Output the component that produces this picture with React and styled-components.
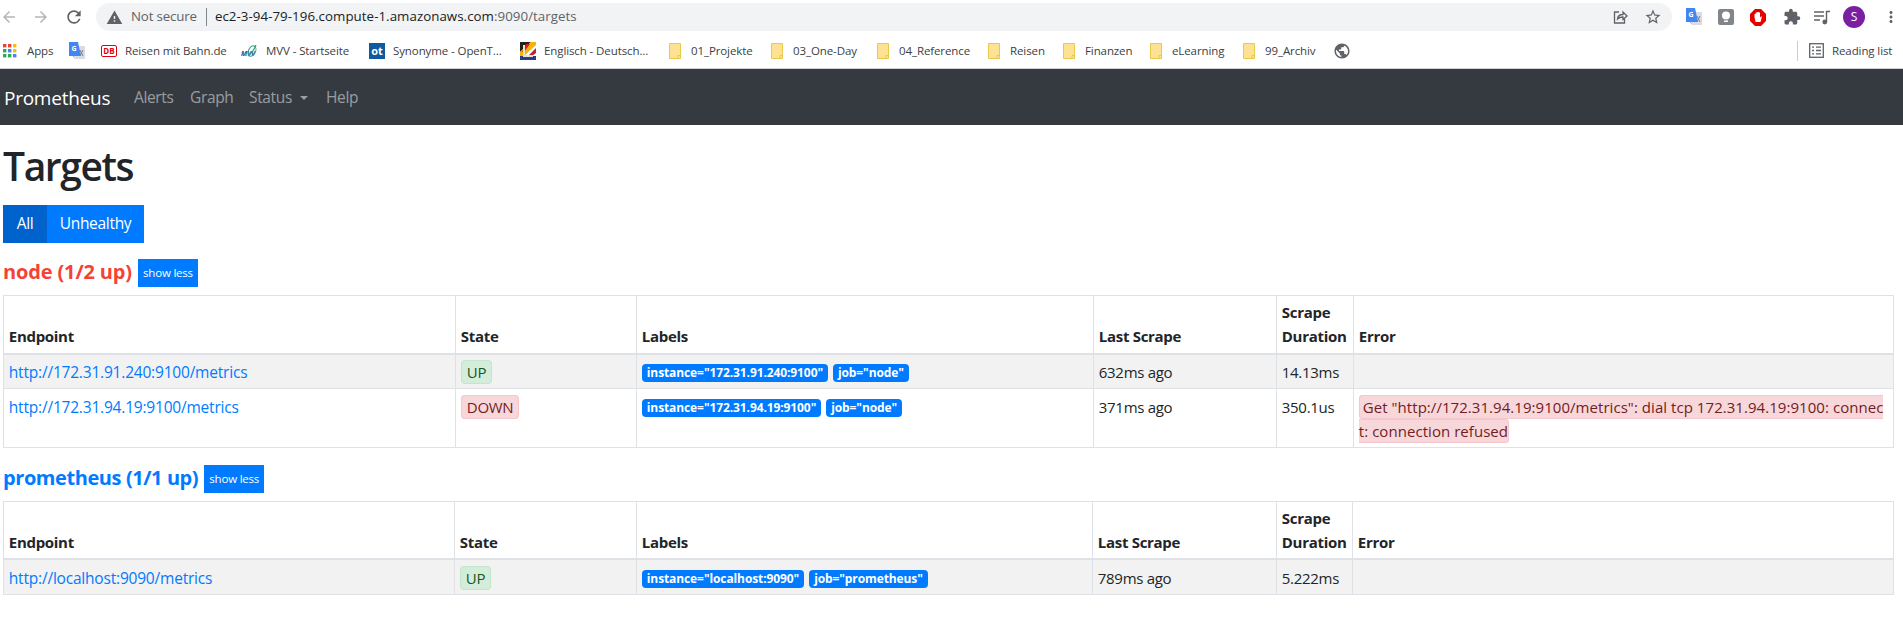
import React from "react";
import styled, { createGlobalStyle } from "styled-components";
import {
  MdArrowBack,
  MdArrowForward,
  MdRefresh,
  MdWarning,
  MdStarBorder,
  MdExtension,
  MdMoreVert,
  MdPublic,
} from "react-icons/md";

const GlobalStyle = createGlobalStyle`
  html, body {
    margin: 0;
    padding: 0;
    background: #fff;
    color: #212529;
    font-family: "Open Sans", "Liberation Sans", sans-serif;
    font-size: 16px;
    line-height: 1.5;
    overflow: hidden;
  }
  * { box-sizing: border-box; }
`;

const Toolbar = styled.div`
  height: 34px;
  display: flex;
  align-items: center;
  background: #fff;
`;

const NavIcon = styled.span`
  width: ${(p) => p.$w || 32}px;
  flex: none;
  display: flex;
  color: ${(p) => (p.$dim ? "#b4b6b9" : "#5f6368")};
  font-size: 18px;
`;

const Omnibox = styled.div`
  margin-left: 4px;
  width: 1576px;
  flex: none;
  height: 28px;
  border-radius: 14px;
  background: #f1f3f4;
  display: flex;
  align-items: center;
  padding: 0 10px;
  font-size: 13.3px;
  color: #202124;
`;

const NotSecure = styled.span`
  color: #5f6368;
  margin-left: 8px;
  letter-spacing: -0.15px;
`;

const Divider = styled.span`
  width: 1px;
  height: 18px;
  background: #80868b;
  margin: 0 8px 0 9px;
`;

const Url = styled.span`
  flex: 1;
  white-space: nowrap;
  letter-spacing: 0.05px;
`;

const UrlDim = styled.span`
  color: #5f6368;
`;

const OmniAction = styled.span`
  display: flex;
  margin-left: 16px;
  color: #5f6368;
  font-size: 17px;
`;

const Extensions = styled.div`
  display: flex;
  align-items: center;
  margin-left: 14px;
`;

const Ext = styled.span`
  width: ${(p) => p.$w || 32}px;
  flex: none;
  display: flex;
  color: #5f6368;
  font-size: 18px;
`;

const Avatar = styled.span`
  width: 22px;
  height: 22px;
  flex: none;
  border-radius: 50%;
  background: #7b1fa2;
  color: #fff;
  font-size: 12px;
  display: flex;
  align-items: center;
  justify-content: center;
`;

const BookmarkBar = styled.div`
  height: 35px;
  padding: 0 0 1px 3px;
  display: flex;
  align-items: center;
  border-bottom: 1px solid #cfd1d3;
  font-size: 11.5px;
  letter-spacing: -0.1px;
  color: #3c4043;
`;

const Bookmark = styled.div`
  width: ${(p) => p.$w}px;
  flex: none;
  display: flex;
  align-items: center;
  gap: ${(p) => p.$gap || 8}px;
  white-space: nowrap;
`;

const BarEnd = styled.div`
  margin-left: auto;
  height: 20px;
  width: 106px;
  flex: none;
  border-left: 1px solid #c9cbce;
  padding-left: 11px;
  display: flex;
  align-items: center;
  gap: 8px;
  white-space: nowrap;
`;

const OtIcon = styled.span`
  width: 16px;
  height: 16px;
  background: #0d5a9e;
  color: #fff;
  font-size: 11px;
  font-weight: 700;
  line-height: 16px;
  text-align: center;
  letter-spacing: 0;
`;

const DbIcon = styled.span`
  width: 16px;
  height: 12px;
  border: 1.5px solid #e3000f;
  border-radius: 2px;
  color: #e3000f;
  font-size: 8px;
  font-weight: 700;
  line-height: 9px;
  text-align: center;
  letter-spacing: 0;
`;

const Navbar = styled.nav`
  height: 56px;
  background: #343a40;
  display: flex;
  align-items: center;
  padding: 2px 0 0 4px;
`;

const Brand = styled.a`
  color: #fff;
  font-size: 19px;
  letter-spacing: -0.25px;
  margin-right: 15px;
  width: 107px;
`;

const NavLink = styled.a`
  color: rgba(255, 255, 255, 0.5);
  padding: 0 8px;
  letter-spacing: -0.35px;
  font-size: 15.5px;
  width: ${(p) => p.$w}px;
  flex: none;
  display: flex;
  align-items: center;
`;

const Caret = styled.span`
  margin-left: 8px;
  border-top: 4.8px solid rgba(255, 255, 255, 0.5);
  border-left: 4.8px solid transparent;
  border-right: 4.8px solid transparent;
`;

const Main = styled.main`
  padding: 17px 3px 0;
`;

const Title = styled.h1`
  margin: 0 0 15px;
  font-size: 39px;
  font-weight: 600;
  line-height: 48px;
  letter-spacing: -1.4px;
`;

const FilterGroup = styled.div`
  display: flex;
`;

const FilterButton = styled.button`
  border: 0;
  height: 38px;
  padding: 0;
  width: ${(p) => p.$w}px;
  color: #fff;
  font: inherit;
  font-size: 15.5px;
  letter-spacing: -0.3px;
  background: ${(p) => (p.$active ? "#0062cc" : "#007bff")};
`;

const Section = styled.section`
  margin-top: ${(p) => p.$top}px;
`;

const SectionHead = styled.div`
  display: flex;
  align-items: center;
  gap: 6px;
  height: 28px;
  margin-bottom: 8px;
`;

const SectionTitle = styled.a`
  color: ${(p) => (p.$bad ? "#f44336" : "#007bff")};
  font-size: 20px;
  font-weight: 700;
  letter-spacing: ${(p) => p.$spacing}px;
  white-space: nowrap;
  margin-bottom: 2px;
`;

const ToggleButton = styled.button`
  border: 0;
  height: 28px;
  width: 60px;
  padding: 0;
  background: #007bff;
  color: #fff;
  font: inherit;
  font-size: 11.5px;
  letter-spacing: -0.2px;
  white-space: nowrap;
`;

const Table = styled.table`
  width: 1890px;
  table-layout: fixed;
  border-collapse: collapse;
  font-size: 15px;
  letter-spacing: -0.3px;
  line-height: 24px;

  th, td {
    border: 1px solid #dee2e6;
    padding: 5.8px 4.8px 3.8px;
    text-align: left;
  }
  th {
    vertical-align: bottom;
    border-bottom-width: 2px;
    padding: 4.3px 4.8px;
    font-weight: 700;
  }
  td {
    vertical-align: top;
  }
  tbody tr:nth-of-type(odd) {
    background: rgba(0, 0, 0, 0.05);
  }
`;

const EndpointLink = styled.a`
  color: #007bff;
  font-size: 15.5px;
  letter-spacing: -0.2px;
`;

const StateTag = styled.span`
  padding: 1px 5px;
  border-radius: 4px;
  border: 1px solid ${(p) => (p.$down ? "#f5c6cb" : "#c3e6cb")};
  background: ${(p) => (p.$down ? "#f8d7da" : "#d4edda")};
  color: ${(p) => (p.$down ? "#721c24" : "#155724")};
`;

const ErrorText = styled(StateTag)`
  padding: 1px 0 1px 3px;
  letter-spacing: 0.05px;
`;

const LabelTag = styled.span`
  display: inline-block;
  margin-right: 5px;
  padding: 0 5px;
  height: 18px;
  line-height: 18px;
  border-radius: 4px;
  background: #007bff;
  color: #fff;
  font-size: 12px;
  font-weight: 700;
  letter-spacing: -0.1px;
  vertical-align: 1px;
`;

const TranslateIcon = () => (
  <svg width="16" height="18" viewBox="0 0 16 18">
    <rect x="6" y="4" width="10" height="13" fill="#dadce0" />
    <path d="M11 8l3 6M14 8l-3 6" stroke="#7b8086" strokeWidth="1" />
    <path d="M0 0h9l3 14H5l1 3-2-3H0z" fill="#4285f4" />
    <text x="2.5" y="9" fontSize="7" fontWeight="700" fill="#fff">G</text>
  </svg>
);

const MvvIcon = () => (
  <svg width="16" height="16" viewBox="0 0 16 16">
    <text x="0" y="13" fontSize="7" fontWeight="700" fontStyle="italic" fill="#1d4f91">MVV</text>
    <path d="M7 13C10 11 13 7 15 2" stroke="#2aa583" strokeWidth="1.2" fill="none" />
    <ellipse cx="11" cy="8" rx="3.5" ry="5.5" transform="rotate(25 11 8)" stroke="#2aa583" fill="none" />
  </svg>
);

const FlagIcon = () => (
  <svg width="16" height="18" viewBox="0 0 16 18">
    <rect width="16" height="18" fill="#fff" />
    <path d="M0 0h11L0 10z" fill="#222" />
    <path d="M11 0h5v3L4 14H0v-4z" fill="#f2b705" />
    <path d="M6 2h4L4 10H2z" fill="#d9231d" />
    <path d="M8 14l8-8v5l-4 3z" fill="#c8202f" />
    <path d="M0 14h16v4H0z" fill="#27407f" />
    <path d="M4 3v11h9" stroke="#e8e2d0" strokeWidth="2" fill="none" />
  </svg>
);

const FolderIcon = () => (
  <svg width="12" height="16" viewBox="0 0 12 16">
    <path d="M.5.5h11v15H.5z" fill="#fde293" stroke="#eac84e" />
    <path d="M9 15.5v-3h2.5" fill="none" stroke="#eac84e" />
  </svg>
);

const AppsIcon = () => {
  const colors = ["#ea4335", "#ea4335", "#fbbc04", "#34a853", "#4285f4", "#fbbc04", "#34a853", "#34a853", "#4285f4"];
  return (
    <svg width="14" height="14" viewBox="0 0 14 14">
      {colors.map((c, i) => (
        <rect key={i} x={(i % 3) * 5} y={Math.floor(i / 3) * 5} width="3.4" height="3.4" fill={c} />
      ))}
    </svg>
  );
};

const ShareIcon = () => (
  <svg width="16" height="16" viewBox="0 0 16 16" fill="none" stroke="#5f6368" strokeWidth="1.3">
    <path d="M7 3H2.5v11h10V10" />
    <path d="M5.5 10c.3-3 2.5-4.5 5.5-4.5V3l4 4-4 3.5V8c-2.5 0-4 .6-5.5 2z" />
  </svg>
);

const BulbIcon = () => (
  <svg width="16" height="16" viewBox="0 0 16 16">
    <rect width="16" height="16" rx="2" fill="#80868b" />
    <circle cx="8" cy="6.5" r="4" fill="#fff" />
    <rect x="6" y="11.5" width="4" height="1.5" fill="#fff" />
  </svg>
);

const StopIcon = () => (
  <svg width="16" height="17" viewBox="0 0 16 17">
    <path d="M5 0h6l5 5v7l-5 5H5l-5-5V5z" fill="#e60000" />
    <path d="M4.5 8V5h1.2v3-4.5h1.5V8 3h1.5v5-4.500H10V9l.8-1.500H12L10.500 13h-5z" fill="#fff" />
  </svg>
);

const MusicIcon = () => (
  <svg width="16" height="16" viewBox="0 0 16 16" fill="none" stroke="#5f6368" strokeWidth="1.4">
    <path d="M0 3h10M0 7h10M0 11h6" />
    <path d="M12.5 13V2.5H16" />
    <circle cx="10.8" cy="13" r="1.7" fill="#5f6368" />
  </svg>
);

const ReadingIcon = () => (
  <svg width="15" height="15" viewBox="0 0 15 15" fill="none" stroke="#5f6368" strokeWidth="1.3">
    <rect x=".7" y=".7" width="13.6" height="13.6" />
    <path d="M3 4.2h2M3 7.5h2M3 10.8h2M7 4.2h5M7 7.5h5M7 10.8h5" />
  </svg>
);

const bookmarks = [
  { w: 66, gap: 10, icon: <AppsIcon />, label: "Apps" },
  { w: 32, icon: <TranslateIcon /> },
  { w: 140, icon: <DbIcon>DB</DbIcon>, label: "Reisen mit Bahn.de" },
  { w: 128, gap: 9, icon: <MvvIcon />, label: "MVV - Startseite" },
  { w: 151, icon: <OtIcon>ot</OtIcon>, label: "Synonyme - OpenT..." },
  { w: 149, icon: <FlagIcon />, label: "Englisch - Deutsch..." },
  { w: 102, gap: 10, icon: <FolderIcon />, label: "01_Projekte" },
  { w: 106, gap: 10, icon: <FolderIcon />, label: "03_One-Day" },
  { w: 111, gap: 10, icon: <FolderIcon />, label: "04_Reference" },
  { w: 75, gap: 10, icon: <FolderIcon />, label: "Reisen" },
  { w: 87, gap: 10, icon: <FolderIcon />, label: "Finanzen" },
  { w: 93, gap: 10, icon: <FolderIcon />, label: "eLearning" },
  { w: 90, gap: 10, icon: <FolderIcon />, label: "99_Archiv" },
  { w: 20, icon: <MdPublic size={18} color="#5f6368" /> },
];

const targetPools = [
  {
    name: "node",
    up: "1/2 up",
    bad: true,
    top: 16,
    spacing: -0.15,
    cols: [452, 181, 457, 183, 77, 540],
    rows: [
      {
        endpoint: "http://172.31.91.240:9100/metrics",
        state: "UP",
        labels: ['instance="172.31.91.240:9100"', 'job="node"'],
        last: "632ms ago",
        duration: "14.13ms",
      },
      {
        endpoint: "http://172.31.94.19:9100/metrics",
        state: "DOWN",
        labels: ['instance="172.31.94.19:9100"', 'job="node"'],
        last: "371ms ago",
        duration: "350.1us",
        error: [
          'Get "http://172.31.94.19:9100/metrics": dial tcp 172.31.94.19:9100: connec',
          "t: connection refused",
        ],
      },
    ],
  },
  {
    name: "prometheus",
    up: "1/1 up",
    top: 17,
    spacing: -0.42,
    cols: [451, 182, 456, 184, 76, 541],
    rows: [
      {
        endpoint: "http://localhost:9090/metrics",
        state: "UP",
        labels: ['instance="localhost:9090"', 'job="prometheus"'],
        last: "789ms ago",
        duration: "5.222ms",
      },
    ],
  },
];

const headers = ["Endpoint", "State", "Labels", "Last Scrape", "Scrape Duration", "Error"];

const TargetTable = ({ pool }) => (
  <Section $top={pool.top}>
    <SectionHead>
      <SectionTitle $bad={pool.bad} $spacing={pool.spacing}>
        {pool.name} ({pool.up})
      </SectionTitle>
      <ToggleButton>show less</ToggleButton>
    </SectionHead>
    <Table>
      <colgroup>
        {pool.cols.map((c, i) => (
          <col key={i} style={{ width: c }} />
        ))}
      </colgroup>
      <thead>
        <tr>
          {headers.map((h) => (
            <th key={h}>{h}</th>
          ))}
        </tr>
      </thead>
      <tbody>
        {pool.rows.map((row) => (
          <tr key={row.endpoint}>
            <td>
              <EndpointLink>{row.endpoint}</EndpointLink>
            </td>
            <td>
              <StateTag $down={row.state === "DOWN"}>{row.state}</StateTag>
            </td>
            <td>
              {row.labels.map((l) => (
                <LabelTag key={l}>{l}</LabelTag>
              ))}
            </td>
            <td>{row.last}</td>
            <td>{row.duration}</td>
            <td>
              {row.error && (
                <ErrorText $down>
                  {row.error[0]}
                  <br />
                  {row.error[1]}
                </ErrorText>
              )}
            </td>
          </tr>
        ))}
      </tbody>
    </Table>
  </Section>
);

const App = () => (
  <>
    <GlobalStyle />
    <Toolbar>
      <NavIcon $dim>
        <MdArrowBack />
      </NavIcon>
      <NavIcon $dim>
        <MdArrowForward />
      </NavIcon>
      <NavIcon $w={28}>
        <MdRefresh size={20} />
      </NavIcon>
      <Omnibox>
        <MdWarning size={17} color="#5f6368" />
        <NotSecure>Not secure</NotSecure>
        <Divider />
        <Url>
          ec2-3-94-79-196.compute-1.amazonaws.com<UrlDim>:9090/targets</UrlDim>
        </Url>
        <OmniAction>
          <ShareIcon />
        </OmniAction>
        <OmniAction>
          <MdStarBorder size={18} />
        </OmniAction>
      </Omnibox>
      <Extensions>
        <Ext>
          <TranslateIcon />
        </Ext>
        <Ext>
          <BulbIcon />
        </Ext>
        <Ext $w={33}>
          <StopIcon />
        </Ext>
        <Ext $w={31}>
          <MdExtension />
        </Ext>
        <Ext $w={29}>
          <MusicIcon />
        </Ext>
        <Avatar>S</Avatar>
        <Ext $w={17} />
        <Ext $w={18}>
          <MdMoreVert />
        </Ext>
      </Extensions>
    </Toolbar>
    <BookmarkBar>
      {bookmarks.map((b, i) => (
        <Bookmark key={i} $w={b.w} $gap={b.gap}>
          {b.icon}
          {b.label && <span>{b.label}</span>}
        </Bookmark>
      ))}
      <BarEnd>
        <ReadingIcon />
        <span>Reading list</span>
      </BarEnd>
    </BookmarkBar>
    <Navbar>
      <Brand>Prometheus</Brand>
      <NavLink $w={56}>Alerts</NavLink>
      <NavLink $w={59}>Graph</NavLink>
      <NavLink $w={77}>
        Status
        <Caret />
      </NavLink>
      <NavLink $w={50}>Help</NavLink>
    </Navbar>
    <Main>
      <Title>Targets</Title>
      <FilterGroup>
        <FilterButton $active $w={44}>All</FilterButton>
        <FilterButton $w={97}>Unhealthy</FilterButton>
      </FilterGroup>
      {targetPools.map((pool) => (
        <TargetTable key={pool.name} pool={pool} />
      ))}
    </Main>
  </>
);

export default App;
